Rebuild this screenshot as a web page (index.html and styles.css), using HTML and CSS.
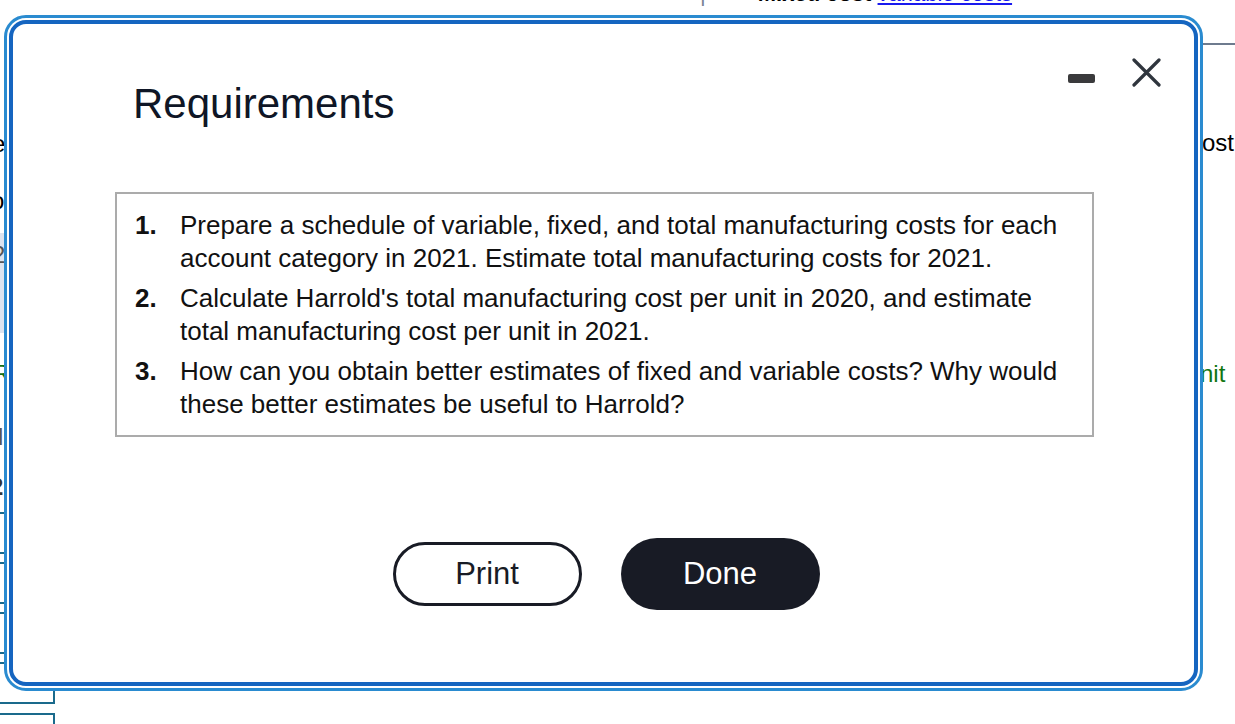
FILE: index.html
```html
<!DOCTYPE html>
<html lang="en">
<head>
<meta charset="utf-8">
<title>Requirements</title>
<link rel="stylesheet" href="styles.css">
</head>
<body>
<div class="page">
  <div class="bg-top"><span class="bg-mark">|</span><span class="bg-black">Mixed cost</span> <span class="bg-link">variable costs</span></div>
  <div class="bg-rule-right"></div>
  <div class="bg-frag bg-e">e</div>
  <div class="bg-frag bg-o">o</div>
  <div class="bg-shade"><span>2</span></div>
  <div class="bg-frag bg-r">R</div>
  <div class="bg-frag bg-l">l</div>
  <div class="bg-frag bg-2">2</div>
  <div class="bg-frag bg-ost">ost</div>
  <div class="bg-frag bg-nit">nit</div>
  <div class="bg-lines">
    <div class="tl tl1"></div>
    <div class="tl tl2"></div>
    <div class="tl tl3"></div>
    <div class="tl tl4"></div>
    <div class="tl tl5"></div>
    <div class="tl tl6"></div>
    <div class="tl tl7"></div>
  </div>
  <div class="bg-cell bg-cell1"></div>
  <div class="bg-cell bg-cell2"></div>

  <div class="focus-ring">
    <div class="modal">
      <div class="modal-header">
        <h1 class="modal-title">Requirements</h1>
        <div class="modal-controls">
          <button class="ctrl ctrl-min" aria-label="Minimize"><span class="min-bar"></span></button>
          <button class="ctrl ctrl-close" aria-label="Close">
            <svg width="29" height="29" viewBox="0 0 29 29"><path d="M2 2 L27 27 M27 2 L2 27" stroke="#2f353d" stroke-width="3.2" stroke-linecap="round" fill="none"/></svg>
          </button>
        </div>
      </div>
      <div class="req-box">
        <ol class="req-list">
          <li><span class="num">1.</span><span class="txt">Prepare a schedule of variable, fixed, and total manufacturing costs for each account category in 2021. Estimate total manufacturing costs for 2021.</span></li>
          <li><span class="num">2.</span><span class="txt">Calculate Harrold's total manufacturing cost per unit in 2020, and estimate total manufacturing cost per unit in 2021.</span></li>
          <li><span class="num">3.</span><span class="txt">How can you obtain better estimates of fixed and variable costs? Why would these better estimates be useful to Harrold?</span></li>
        </ol>
      </div>
      <div class="actions">
        <button class="btn btn-print">Print</button>
        <button class="btn btn-done">Done</button>
      </div>
    </div>
  </div>
</div>
</body>
</html>
```

FILE: styles.css
```css
html, body {
  margin: 0;
  padding: 0;
  background: #ffffff;
}
body {
  font-family: "Liberation Sans", Arial, Helvetica, sans-serif;
  overflow: hidden;
}
.page {
  position: relative;
  width: 1235px;
  height: 724px;
  overflow: hidden;
  background: #ffffff;
}

/* ---------- background page fragments ---------- */
.bg-top {
  position: absolute;
  top: -17px;
  left: 700px;
  font-size: 22px;
  line-height: 22px;
  white-space: nowrap;
  font-weight: bold;
}
.bg-mark { color: #7a8494; margin-right: 52px; font-weight: normal; }
.bg-black { color: #000; }
.bg-link { color: #1a1aee; text-decoration: underline; font-weight: normal; }
.bg-rule-right {
  position: absolute;
  top: 43px;
  left: 1200px;
  width: 40px;
  height: 2px;
  background: #6e7b8e;
}
.bg-frag {
  position: absolute;
  font-size: 24px;
  line-height: 28px;
  color: #000;
}
.bg-e { left: -8px; top: 130px; }
.bg-o { left: -9px; top: 187px; }
.bg-shade {
  position: absolute;
  left: 0;
  top: 233px;
  width: 8px;
  height: 100px;
  background: #dce3ef;
}
.bg-shade span {
  position: absolute;
  left: -8px;
  top: 8px;
  font-size: 24px;
  color: #555;
}
.bg-r { left: -7px; top: 360px; color: #157015; }
.bg-l { left: -2px; top: 423px; color: #555; }
.bg-2 { left: -10px; top: 473px; color: #333; font-weight: bold; }
.bg-ost { left: 1202px; top: 129px; }
.bg-nit { left: 1200px; top: 360px; color: #117611; }
.bg-lines .tl {
  position: absolute;
  left: 0;
  width: 10px;
  height: 2px;
  background: #1a6a8c;
}
.tl1 { top: 512px; }
.tl2 { top: 552px; }
.tl3 { top: 562px; }
.tl4 { top: 602px; }
.tl5 { top: 612px; }
.tl6 { top: 652px; }
.tl7 { top: 662px; }
.bg-cell {
  position: absolute;
  left: -2px;
  width: 55px;
  border-right: 2px solid #1a6a8c;
}
.bg-cell1 {
  top: 680px;
  height: 22px;
  border-bottom: 2px solid #1a6a8c;
}
.bg-cell2 {
  top: 713px;
  height: 20px;
  border-top: 2px solid #1a6a8c;
}

/* ---------- modal ---------- */
.focus-ring {
  position: absolute;
  left: 4px;
  top: 15px;
  width: 1199px;
  height: 676px;
  box-sizing: border-box;
  border: 3px solid #2a8bd0;
  padding: 2px;
  border-radius: 22px;
  background: #ffffff;
}
.modal {
  box-sizing: border-box;
  height: 100%;
  border: 4px solid #1565c0;
  border-radius: 17px;
  background: #ffffff;
  display: flex;
  flex-direction: column;
}
.modal-header {
  display: flex;
  justify-content: space-between;
  align-items: flex-start;
  padding: 34px 33px 0 120px;
}
.modal-title {
  margin: 22px 0 0 0;
  font-size: 42px;
  line-height: 48px;
  font-weight: normal;
  color: #0f1626;
}
.modal-controls {
  display: flex;
  align-items: flex-start;
  gap: 37px;
}
.ctrl {
  border: 0;
  padding: 0;
  margin: 0;
  background: transparent;
  display: block;
}
.ctrl-min {
  margin-top: 16px;
  width: 27px;
  height: 9px;
}
.min-bar {
  display: block;
  width: 27px;
  height: 9px;
  border-radius: 2px;
  background: #3a3a3c;
}
.ctrl-close {
  width: 29px;
  height: 29px;
}
.ctrl-close svg { display: block; }

.req-box {
  margin: 64px 100px 0 102px;
  border: 2px solid #ababab;
  padding: 15px 20px 14px 18px;
}
.req-list {
  list-style: none;
  margin: 0;
  padding: 0;
  display: flex;
  flex-direction: column;
  gap: 7px;
}
.req-list li {
  display: flex;
  font-size: 26px;
  line-height: 33px;
  color: #111111;
}
.num {
  flex: 0 0 45px;
  font-weight: bold;
}
.txt {
  flex: 1;
}

.actions {
  display: flex;
  justify-content: center;
  align-items: center;
  gap: 39px;
  margin-top: 101px;
  padding-left: 5px;
}
.btn {
  font-family: "Liberation Sans", Arial, Helvetica, sans-serif;
  font-size: 31px;
  border-radius: 40px;
  box-sizing: border-box;
  cursor: pointer;
  padding: 0;
}
.btn-print {
  width: 189px;
  height: 64px;
  border: 3px solid #181b25;
  background: #ffffff;
  color: #181b25;
}
.btn-done {
  width: 199px;
  height: 72px;
  border: 0;
  background: #181b25;
  color: #ffffff;
}
```
